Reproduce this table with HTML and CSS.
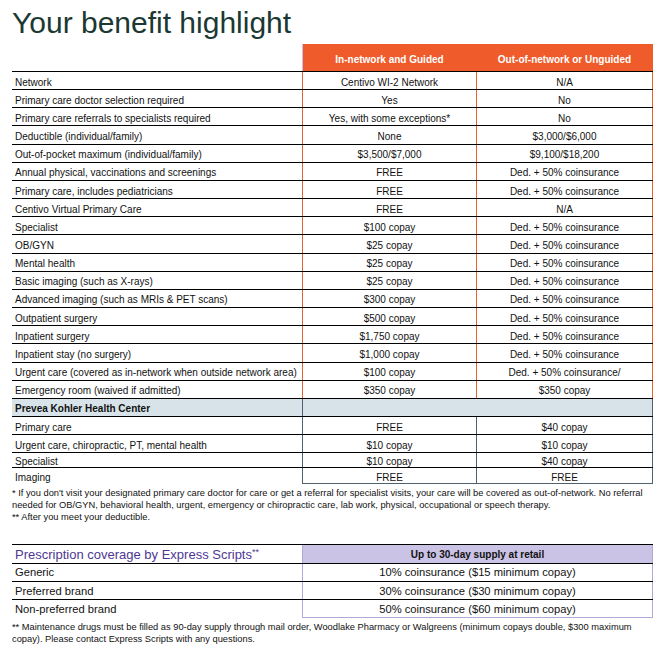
FILE: index.html
```html
<!DOCTYPE html>
<html lang="en">
<head>
<meta charset="utf-8">
<title>Your benefit highlight</title>
<link rel="stylesheet" href="styles.css">
</head>
<body>
<h1 class="title">Your benefit highlight</h1>

<div class="benefits">
  <div class="grow head">
    <div class="h first">In-network and Guided</div>
    <div class="h">Out-of-network or Unguided</div>
  </div>
  <div class="rows">
    <div class="grow r"><div class="l">Network</div><div class="v">Centivo WI-2 Network</div><div class="v">N/A</div></div>
    <div class="grow r"><div class="l">Primary care doctor selection required</div><div class="v">Yes</div><div class="v">No</div></div>
    <div class="grow r"><div class="l">Primary care referrals to specialists required</div><div class="v">Yes, with some exceptions*</div><div class="v">No</div></div>
    <div class="grow r"><div class="l">Deductible (individual/family)</div><div class="v">None</div><div class="v">$3,000/$6,000</div></div>
    <div class="grow r"><div class="l">Out-of-pocket maximum (individual/family)</div><div class="v">$3,500/$7,000</div><div class="v">$9,100/$18,200</div></div>
    <div class="grow r"><div class="l">Annual physical, vaccinations and screenings</div><div class="v">FREE</div><div class="v">Ded. + 50% coinsurance</div></div>
    <div class="grow r"><div class="l">Primary care, includes pediatricians</div><div class="v">FREE</div><div class="v">Ded. + 50% coinsurance</div></div>
    <div class="grow r"><div class="l">Centivo Virtual Primary Care</div><div class="v">FREE</div><div class="v">N/A</div></div>
    <div class="grow r"><div class="l">Specialist</div><div class="v">$100 copay</div><div class="v">Ded. + 50% coinsurance</div></div>
    <div class="grow r"><div class="l">OB/GYN</div><div class="v">$25 copay</div><div class="v">Ded. + 50% coinsurance</div></div>
    <div class="grow r"><div class="l">Mental health</div><div class="v">$25 copay</div><div class="v">Ded. + 50% coinsurance</div></div>
    <div class="grow r"><div class="l">Basic imaging (such as X-rays)</div><div class="v">$25 copay</div><div class="v">Ded. + 50% coinsurance</div></div>
    <div class="grow r"><div class="l">Advanced imaging (such as MRIs &amp; PET scans)</div><div class="v">$300 copay</div><div class="v">Ded. + 50% coinsurance</div></div>
    <div class="grow r"><div class="l">Outpatient surgery</div><div class="v">$500 copay</div><div class="v">Ded. + 50% coinsurance</div></div>
    <div class="grow r"><div class="l">Inpatient surgery</div><div class="v">$1,750 copay</div><div class="v">Ded. + 50% coinsurance</div></div>
    <div class="grow r"><div class="l">Inpatient stay (no surgery)</div><div class="v">$1,000 copay</div><div class="v">Ded. + 50% coinsurance</div></div>
    <div class="grow r"><div class="l">Urgent care (covered as in-network when outside network area)</div><div class="v">$100 copay</div><div class="v">Ded. + 50% coinsurance/</div></div>
    <div class="grow r"><div class="l">Emergency room (waived if admitted)</div><div class="v">$350 copay</div><div class="v">$350 copay</div></div>
    <div class="grow r sec"><div class="l">Prevea Kohler Health Center</div><div class="blank"></div></div>
    <div class="grow r pv"><div class="l">Primary care</div><div class="v">FREE</div><div class="v">$40 copay</div></div>
    <div class="grow r pv"><div class="l">Urgent care, chiropractic, PT, mental health</div><div class="v">$10 copay</div><div class="v">$10 copay</div></div>
    <div class="grow r pv short"><div class="l">Specialist</div><div class="v">$10 copay</div><div class="v">$40 copay</div></div>
    <div class="grow r pv last"><div class="l">Imaging</div><div class="v">FREE</div><div class="v">FREE</div></div>
  </div>
</div>

<p class="note first-note">* If you don't visit your designated primary care doctor for care or get a referral for specialist visits, your care will be covered as out-of-network. No referral<br>needed for OB/GYN, behavioral health, urgent, emergency or chiropractic care, lab work, physical, occupational or speech therapy.<br>** After you meet your deductible.</p>

<div class="rx">
  <div class="rxrow rxhead">
    <div class="l">Prescription coverage by Express Scripts<span class="stars">**</span></div>
    <div class="v">Up to 30-day supply at retail</div>
  </div>
  <div class="rxrow"><div class="l">Generic</div><div class="v">10% coinsurance ($15 minimum copay)</div></div>
  <div class="rxrow"><div class="l">Preferred brand</div><div class="v">30% coinsurance ($30 minimum copay)</div></div>
  <div class="rxrow last"><div class="l">Non-preferred brand</div><div class="v">50% coinsurance ($60 minimum copay)</div></div>
</div>

<p class="note rx-note">** Maintenance drugs must be filled as 90-day supply through mail order, Woodlake Pharmacy or Walgreens (minimum copays double, $300 maximum<br>copay). Please contact Express Scripts with any questions.</p>
</body>
</html>
```

FILE: styles.css
```css
* {
  box-sizing: border-box;
}

body {
  margin: 0;
  padding: 0 0 0 12px;
  font-family: "Liberation Sans", Arial, sans-serif;
  color: #111;
  background: #fff;
}

.title {
  font-size: 30px;
  font-weight: normal;
  line-height: 34px;
  margin: 6px 0 4px;
  color: #1b3833;
}

.benefits {
  width: 641px;
}

.grow {
  display: grid;
  grid-template-columns: 290px 174px 177px;
}

.head {
  height: 27px;
}

.head .h {
  background: #ef5b2b;
  color: #fff;
  font-weight: bold;
  font-size: 10px;
  display: flex;
  align-items: center;
  justify-content: center;
  padding-top: 3px;
  white-space: nowrap;
}

.head .h.first {
  grid-column: 2;
  border-left: 1px solid #cdc1e2;
}

.rows {
  border-top: 1px solid #000;
}

.r {
  height: 18.17px;
  border-bottom: 1px solid #000;
  font-size: 10px;
}

.r > div {
  display: flex;
  align-items: center;
  padding-top: 3px;
  white-space: nowrap;
}

.r .l {
  padding-left: 3px;
}

.r .v {
  justify-content: center;
  border-left: 1px solid #e8642f;
}

.r .v + .v {
  border-right: 1px solid #e8642f;
}

.r.sec {
  background: #d7e3e8;
  font-weight: bold;
}

.r.sec .blank {
  grid-column: 2 / 4;
  border-left: 1px solid #4f6270;
  border-right: 1px solid #4f6270;
}

.r.pv .v {
  border-color: #4f6270;
}

.r.short {
  height: 15px;
}

.r.last {
  height: 16px;
  border-bottom: none;
}

.r.last .v {
  border-bottom: 1px solid #4f6270;
}

.note {
  font-size: 9.3px;
  line-height: 12px;
  margin: 3px 0 0;
  white-space: nowrap;
  color: #111;
}

.rx {
  width: 641px;
  margin-top: 21px;
  border-top: 1px solid #000;
}

.rxrow {
  display: grid;
  grid-template-columns: 290px 351px;
  height: 18.3px;
  border-bottom: 1px solid #000;
  font-size: 11.2px;
}

.rxrow > div {
  display: flex;
  align-items: center;
  white-space: nowrap;
}

.rxrow .l {
  padding-left: 3px;
}

.rxrow .v {
  justify-content: center;
  border-left: 1px solid #b3a7da;
  border-right: 1px solid #b3a7da;
}

.rxhead .l {
  color: #4d3894;
  font-size: 13px;
  padding-top: 1px;
}

.rxhead .stars {
  font-size: 9px;
  align-self: flex-start;
  margin-top: 1px;
}

.rxhead .v {
  background: #cbc3e5;
  font-weight: bold;
  font-size: 10px;
  padding-top: 1px;
}

.rxrow.last {
  border-bottom: none;
}

.rxrow.last .v {
  border-bottom: 1px solid #b3a7da;
}

.rx-note {
  margin-top: 3px;
}
```
